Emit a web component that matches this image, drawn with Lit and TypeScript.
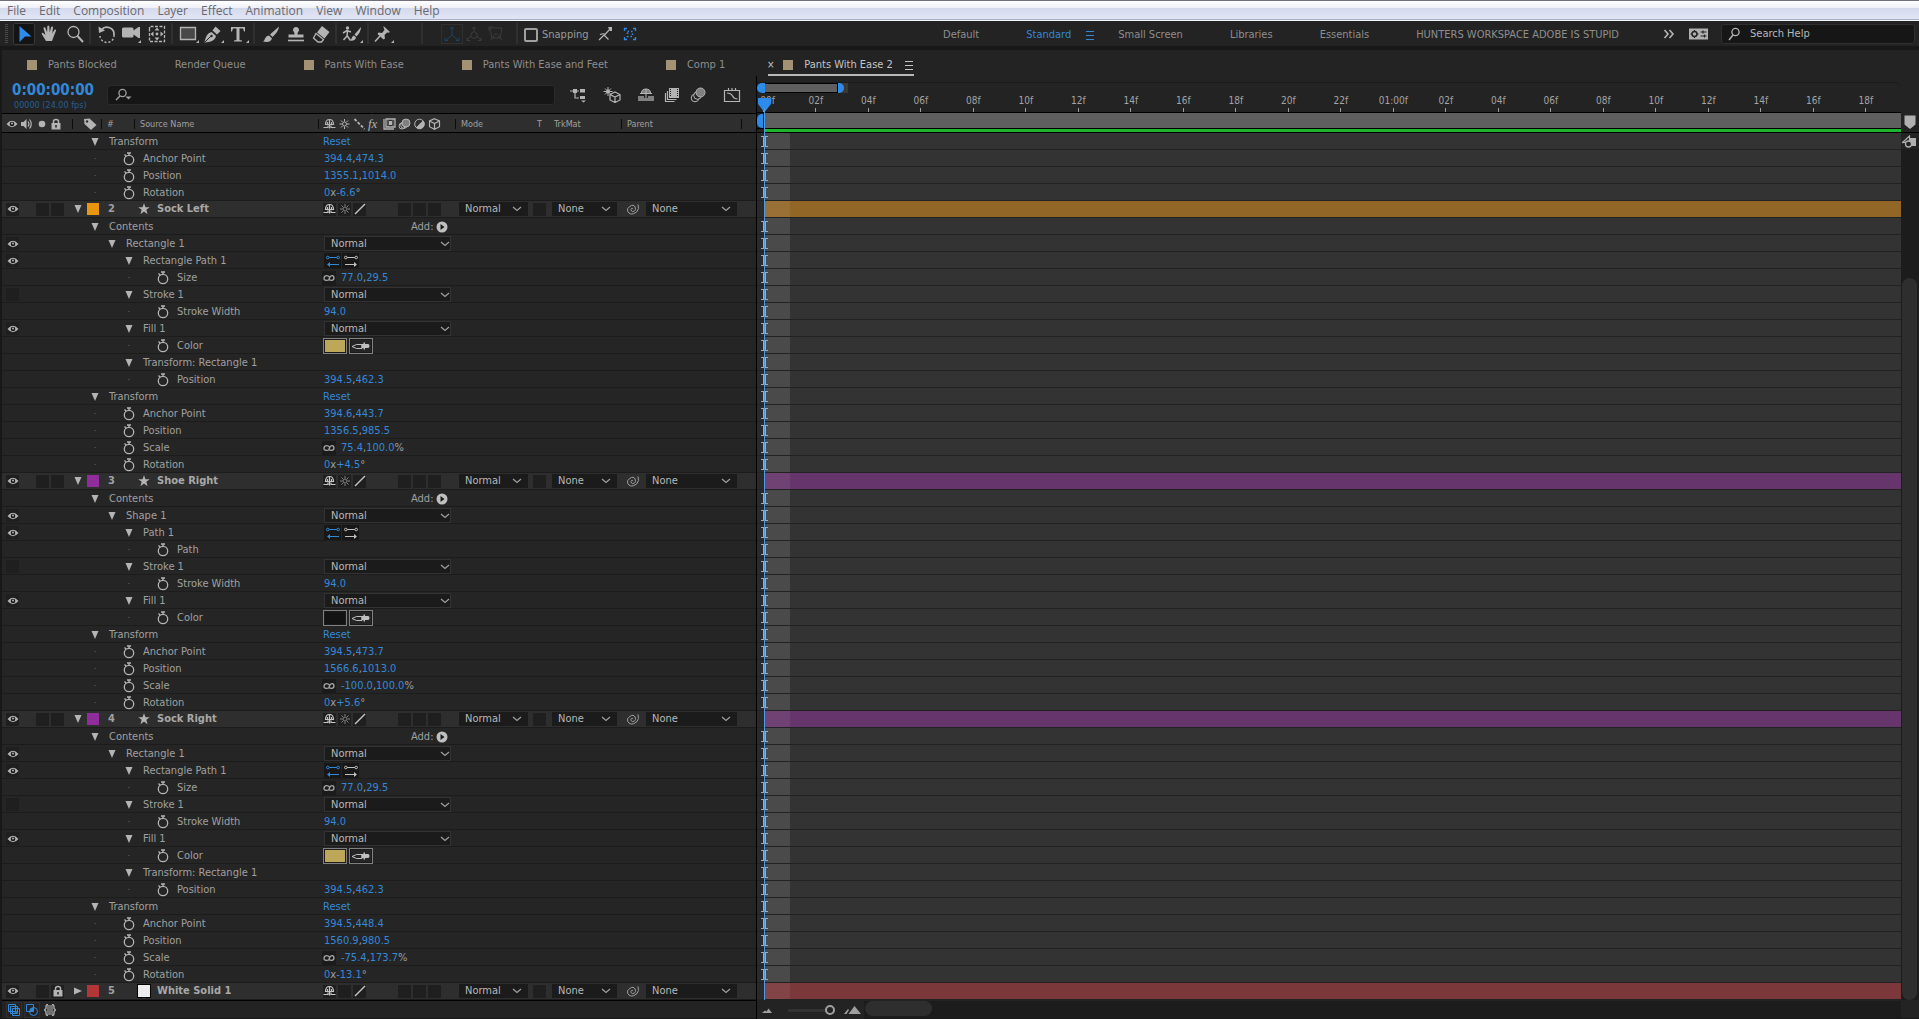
import { LitElement, html, svg, css, nothing } from "lit";
import { customElement, property } from "lit/decorators.js";

type Ctrl =
  | { kind: "none" }
  | { kind: "reset" }
  | { kind: "add" }
  | { kind: "mode" }
  | { kind: "direction" }
  | { kind: "color"; color: string }
  | { kind: "value"; text: string; link?: boolean };

interface Layer { row: "layer"; num: number; name: string; color: string; bar: string; solid?: boolean; }
interface Group { row: "group"; level: number; name: string; ctrl: Ctrl; eye?: "on" | "off"; }
interface Prop { row: "prop"; level: number; name: string; ctrl: Ctrl; }
type Row = Layer | Group | Prop;

const none: Ctrl = { kind: "none" };
const mode: Ctrl = { kind: "mode" };
const group = (level: number, name: string, ctrl: Ctrl = none, eye?: "on" | "off"): Group =>
  ({ row: "group", level, name, ctrl, eye });
const prop = (level: number, name: string, text: string, link = false): Prop =>
  ({ row: "prop", level, name, ctrl: text ? { kind: "value", text, link } : none });
const colorProp = (color: string): Prop =>
  ({ row: "prop", level: 3, name: "Color", ctrl: { kind: "color", color } });
const strokeFill = (color: string): Row[] => [
  group(3, "Stroke 1", mode, "off"),
  prop(3, "Stroke Width", "94.0"),
  group(3, "Fill 1", mode, "on"),
  colorProp(color),
];
const transform = (anchor: string, position: string, scale: string, rotation: string): Row[] => [
  group(1, "Transform", { kind: "reset" }),
  prop(1, "Anchor Point", anchor),
  prop(1, "Position", position),
  ...(scale ? [prop(1, "Scale", scale, true)] : []),
  prop(1, "Rotation", rotation),
];
const rectangle = (): Row[] => [
  group(1, "Contents", { kind: "add" }),
  group(2, "Rectangle 1", mode, "on"),
  group(3, "Rectangle Path 1", { kind: "direction" }, "on"),
  prop(3, "Size", "77.0,29.5", true),
  ...strokeFill("#bda758"),
  group(3, "Transform: Rectangle 1"),
  prop(3, "Position", "394.5,462.3"),
];

const ROWS: Row[] = [
  ...transform("394.4,474.3", "1355.1,1014.0", "", "0x-6.6°"),
  { row: "layer", num: 2, name: "Sock Left", color: "#e8960f", bar: "#926627" },
  ...rectangle(),
  ...transform("394.6,443.7", "1356.5,985.5", "75.4,100.0%", "0x+4.5°"),
  { row: "layer", num: 3, name: "Shoe Right", color: "#8f2d9a", bar: "#66356b" },
  group(1, "Contents", { kind: "add" }),
  group(2, "Shape 1", mode, "on"),
  group(3, "Path 1", { kind: "direction" }, "on"),
  prop(3, "Path", ""),
  ...strokeFill("#131313"),
  ...transform("394.5,473.7", "1566.6,1013.0", "-100.0,100.0%", "0x+5.6°"),
  { row: "layer", num: 4, name: "Sock Right", color: "#8f2d9a", bar: "#66356b" },
  ...rectangle(),
  ...transform("394.5,448.4", "1560.9,980.5", "-75.4,173.7%", "0x-13.1°"),
  { row: "layer", num: 5, name: "White Solid 1", color: "#b23636", bar: "#7a383b", solid: true },
];

const icon = (w: number, h: number, body: unknown) =>
  html`<svg class="icon" width=${w} height=${h} viewBox="0 0 ${w} ${h}" aria-hidden="true">${body}</svg>`;

const line = "fill:none;stroke:currentColor";

const I = {
  select: icon(22, 22, svg`<path d="M6.500 3l12 10.500h-6.500l-5.500 5.500z" fill="#2d8ceb"/>`),
  hand: icon(22, 22, svg`<path d="M7 18l-4-6.500q-1-2 .8-1.800l2.700 2.300-2-6.500q0-1.600 1.600-1.200l2 5 .2-6q1-1.600 2 0l.4 6 1.600-5.500q1.300-1 1.800.4l-.9 6.300 2.300-3.700q1.500-.8 1.600.7l-2.600 6.500-1.500 4z" fill="currentColor"/>`),
  zoom: icon(22, 22, svg`<circle cx="9.500" cy="9" r="5.500" style=${line} stroke-width="1.300"/><path d="M13.500 13l5.500 6" style=${line} stroke-width="2"/>`),
  rotate: icon(22, 22, svg`<path d="M5.500 7a7 7 0 0 1 12.500 5" style=${line} stroke-width="1.800"/><path d="M2.500 3.500l.5 6.500 6-2.500z" fill="currentColor"/><path d="M18 12a7 7 0 0 1-14 1" style=${line} stroke-width="1.500" stroke-dasharray="2 2"/>`),
  camera: icon(25, 22, svg`<path d="M3 6q0-1.500 1.500-1.500h8.500q1.500 0 1.500 1.500v1.500l5-3.500h1.500v11h-1.500l-5-3.500v1.500q0 1.500-1.500 1.500h-8.500q-1.500 0-1.500-1.500z" fill="currentColor"/><path d="M22 17v3h-3z" fill="currentColor"/>`),
  pan: icon(22, 22, svg`<path d="M3.500 7v-3.500h15v15h-15z" style=${line} stroke-width="1.300" stroke-dasharray="3 1.500"/><path d="M11 4.500l2.500 3h-5zM11 17.500l2.500-3h-5zM4.500 11l3-2.500v5zM17.500 11l-3-2.500v5z" fill="currentColor"/><circle cx="11" cy="11" r="1.400" fill="currentColor"/>`),
  rect: icon(25, 22, svg`<path d="M4.500 4.500h15v12h-15z" fill="#484848" stroke="currentColor" stroke-width="1.300"/><path d="M23 17v3h-3z" fill="currentColor"/>`),
  pen: icon(25, 22, svg`<path d="M3.500 19.500c1-5 2-9 7-10.500l4.500 4c-1 4.500-5 6-11.500 6.500z" fill="currentColor"/><path d="M4 19l6-6" stroke="#232323"/><circle cx="10.500" cy="13" r="1.200" fill="#232323"/><path d="M11.500 7.500l3-4 5 4.500-3.500 3.500z" fill="currentColor"/><path d="M23 17v3h-3z" fill="currentColor"/>`),
  type: icon(25, 22, svg`<path d="M5 4h14v4.500h-1l-1-3h-3.500v11.500l2.500.6v.9h-8v-.9l2.500-.6v-11.500h-3.500l-1 3h-1z" fill="currentColor"/><path d="M23 17v3h-3z" fill="currentColor"/>`),
  brush: icon(22, 22, svg`<path d="M19 3.500l-9 8 2.500 2.500q6-5.500 6.500-10.500z" fill="currentColor"/><path d="M3 18.500c2-.5 1.500-5.500 6-6l3 3c-1 3.500-5 4-9 3z" fill="currentColor"/>`),
  stamp: icon(22, 22, svg`<path d="M9.500 11.500q0-2-1.500-4 0-3.500 3-3.500t3 3.500q-1.500 2-1.500 4h6v3h-15v-3z" fill="currentColor"/><path d="M3 17.500h16" stroke="currentColor" stroke-width="1.600"/>`),
  eraser: icon(22, 22, svg`<path d="M12 3l7.500 6-5 6.500-7.500-6z" fill="currentColor"/><path d="M6 10.500l7.500 6-2 2.500h-3.500l-4.500-4z" style=${line} stroke-width="1.300"/>`),
  roto: icon(25, 22, svg`<circle cx="7.500" cy="5" r="1.700" fill="currentColor"/><path d="M3 10l4-2.500 4 1.500M7.500 8l-.5 5-3.500 4M7 12.500l3.500 5" style=${line} stroke-width="1.500"/><path d="M21 4l-6.500 7.500 2 2q4.500-4.500 4.500-9.500zM10 17.500c2-.5 1-4 4-5l2 2c-.5 3-3.500 3.500-6 3z" fill="currentColor"/><path d="M23 17v3h-3z" fill="currentColor"/>`),
  pin: icon(25, 22, svg`<path d="M11.500 3l6.500 6-1.500.8-1.500-.3-2.500 2.500.5 3.500-1.500 1-6-5.500 1-1.500 3.500.4 2.500-3-.8-2z" fill="currentColor"/><path d="M8 13l-5 5.500" stroke="currentColor" stroke-width="1.500"/><path d="M22 17v3h-3z" fill="currentColor"/>`),
  axis1: icon(20, 20, svg`<path d="M10 3v8l-6 5M10 11l6 5M8 5l2-2 2 2M3 13.500v3h3M17 13.500v3h-3" style=${line}/>`),
  axis2: icon(20, 20, svg`<path d="M10 3v5M7 12l-4 4M13 12l4 4M8 5l2-2 2 2M3 13.500v3h3M17 13.500v3h-3" style=${line}/><path d="M10 7.500l3 2v3.500l-3 1.500-3-1.500v-3.500z" style=${line}/>`),
  axis3: icon(20, 20, svg`<path d="M4 4l12 0-2 10h-8zM3 7v-4h4M10 9l-5 7M10 9l6 7" style=${line}/>`),
  snap1: icon(16, 16, svg`<path d="M2 14l5-5M7 9l4.500 4.500M3 8.500q4-1.500 5 0l5-5.500" style=${line} stroke-width="1.200"/><path d="M11 1h4v4h-2z" fill="currentColor"/>`),
  snap2: icon(16, 16, svg`<path d="M2.500 5v-2.500h2.500M11 2.500h2.500v2.500M13.500 11v2.500h-2.500M5 13.500h-2.500v-2.500" style=${line} stroke-width="1.300"/><path d="M5.500 5.500h5v5h-5z" style=${line} stroke-width="1.500" stroke-dasharray="1.500 2"/>`),
  burger: icon(10, 10, svg`<path d="M1 1.500h8M1 5.500h8M1 9.500h8" style=${line}/>`),
  chevrons: icon(12, 12, svg`<path d="M1.500 2l3.500 4-3.500 4M6.500 2l3.500 4-3.500 4" style=${line} stroke-width="1.600"/>`),
  sync: icon(20, 12, svg`<path d="M0 .500h19v11h-19z" fill="#b0b0b0"/><circle cx="5.500" cy="6" r="2.500" fill="none" stroke="#232323" stroke-width="1.500"/><path d="M5.500 2v1.500M5.500 8.500v1.500M1.500 6h1.500M8 6h1.500M11.500 4h6M11.500 8h6M14 2.500v3M15.500 6.500v3" stroke="#232323" stroke-width="1.200"/>`),
  search: icon(14, 14, svg`<circle cx="8.500" cy="5" r="3.600" style=${line} stroke-width="1.300"/><path d="M6 8l-4 5" style=${line} stroke-width="1.500"/>`),
  searchMenu: icon(18, 14, svg`<circle cx="7.500" cy="5" r="3.600" style=${line} stroke-width="1.300"/><path d="M5 8l-4 4" style=${line} stroke-width="1.500"/><path d="M10.500 8.500h6l-3 3z" fill="currentColor"/>`),
  flow: icon(18, 16, svg`<path d="M1 4h9M6 4v7h4" style=${line} stroke-width="1.200"/><path d="M4 2h4v4h-4zM11 2h5v3.500h-5zM11 9h5v3h-5z" fill="currentColor"/><path d="M12 13.500h5l-2.500 2z" fill="currentColor"/>`),
  draft: icon(18, 16, svg`<path d="M5 0v9M.500 4.500h9M2 1.500l6 6M8 1.500l-6 6" style=${line}/><circle cx="5" cy="4.500" r="2" fill="currentColor"/><path d="M12 5l5 2.500v5.500l-5 2.500-5-2.500v-5.500zM7 7.500l5 2.500 5-2.500M12 10v5.500" fill="#232323" stroke="currentColor" stroke-width="1.200"/>`),
  shyBig: icon(18, 16, svg`<path d="M4 7q0-5 5-5t5 5z" fill="#808080"/><path d="M4.500 6.500q0-4.500 4.500-4.500t4.500 4.500M9 2v9M3 6.500h12" style=${line}/><path d="M1 9h6v2h4v-2h6v5h-16z" fill="#808080"/>`),
  blendBig: icon(16, 16, svg`<path d="M5 1h10v10h-10z" fill="currentColor"/><path d="M6.500 2v8M13.500 2v8" stroke="#232323" stroke-dasharray="1 1"/><path d="M3.500 4v8.500h9M1.500 6v8.500h9" style=${line} stroke-width="1.200"/>`),
  blurBig: icon(16, 16, svg`<circle cx="5" cy="11" r="3.800" style=${line}/><circle cx="7.500" cy="8.500" r="3.800" fill="#232323" stroke="currentColor"/><circle cx="10.500" cy="5.500" r="4.500" fill="#808080" stroke="currentColor"/>`),
  graph: icon(18, 16, svg`<path d="M1.500 3.500h15v11h-15zM5.500 1v3M9 1v3M12.500 1v3" style=${line} stroke-width="1.200"/><path d="M4 6q4 0 5.500 3t5 3" style=${line} stroke-width="1.200"/>`),
  eye: icon(12, 10, svg`<path d="M.500 5q5.500-6.500 11 0-5.500 6.500-11 0z" fill="currentColor"/><circle cx="6" cy="5" r="2.300" fill="#1b1b1b"/><circle cx="6" cy="4.500" r="1" fill="currentColor"/>`),
  sound: icon(14, 12, svg`<path d="M1 4h2.500l3-3v10l-3-3h-2.500z" fill="currentColor"/><path d="M8 3.500q2 2.500 0 5M9.500 1.500q3.500 4.500 0 9" style=${line} stroke-width="1.200"/>`),
  solo: icon(12, 12, svg`<circle cx="6" cy="6" r="3.300" fill="currentColor"/>`),
  lock: icon(12, 12, svg`<path d="M3.500 6v-2.500q0-2 2.500-2t2.500 2v2.500" style=${line} stroke-width="1.500"/><path d="M1.500 5h9v6.500h-9z" fill="currentColor"/><path d="M6 7v2.500" stroke="#232323" stroke-width="1.500"/>`),
  tag: icon(14, 14, svg`<path d="M1 2l5.500-.5 7 6.500-5.500 5-6.500-6z" fill="currentColor"/><circle cx="4" cy="4.500" r="1.200" fill="#2e2e2e"/>`),
  shy: icon(13, 12, svg`<path d="M2.500 6.500q0-5 4-5t4 5zM6.500 1.500v9M4.500 4v2M8.500 4v2" style=${line} stroke-width="1.200"/><path d="M.500 9.500h4.500v-2M12.500 9.500h-4.500v-2" style=${line} stroke-width="1.200"/>`),
  sun: icon(12, 12, svg`<circle cx="6" cy="6" r="2" style=${line}/><path d="M6 1v2.500M6 8.500v2.500M1 6h2.500M8.500 6h2.500M2.500 2.500l1.500 1.500M8 8l1.500 1.500M9.500 2.500l-1.500 1.500M4 8l-1.500 1.500" style=${line}/>`),
  quality: icon(12, 12, svg`<path d="M1 1l10 10" stroke="currentColor" stroke-width="1.800" stroke-dasharray="3 1.500"/>`),
  slash: icon(12, 12, svg`<path d="M1 11l10-10" stroke="currentColor" stroke-width="1.400"/>`),
  film: icon(13, 12, svg`<path d="M1 1v10h10M3 1h9v8h-9z" style=${line} stroke-width="1.300"/><path d="M5 1.500v7M10 1.500v7" stroke="currentColor" stroke-dasharray="1 1"/><path d="M6 3h3v4h-3z" fill="currentColor"/>`),
  blur: icon(13, 12, svg`<circle cx="4" cy="8" r="3" style=${line}/><circle cx="6" cy="7" r="3.300" style=${line}/><circle cx="8" cy="5" r="4" fill="#808080" stroke="currentColor"/>`),
  adjust: icon(12, 12, svg`<circle cx="6" cy="6" r="4.800" style=${line}/><path d="M9.500 2.500a4.900 4.900 0 1 1-7 7z" fill="currentColor"/>`),
  cube: icon(12, 12, svg`<path d="M6 .700l5 2.300v5.700l-5 2.600-5-2.600v-5.700zM1 3l5 2.500 5-2.500M6 5.500v5.800" style=${line} stroke-width="1.200"/>`),
  down: icon(8, 10, svg`<path d="M.500 1h7l-3.500 8z" fill="currentColor"/>`),
  right: icon(10, 8, svg`<path d="M1 .500l8 3.500-8 3.500z" fill="currentColor"/>`),
  star: icon(12, 12, svg`<path d="M6 .300l1.500 4h4.200l-3.400 2.500 1.300 4.400-3.600-2.700-3.600 2.700 1.300-4.400-3.400-2.500h4.200z" fill="currentColor"/>`),
  watch: icon(12, 14, svg`<circle cx="6" cy="8" r="4.700" style=${line} stroke-width="1.300"/><path d="M4 1h4M6 1v2.500M1.500 2.500l1.800 1.800" style=${line} stroke-width="1.300"/>`),
  add: icon(12, 12, svg`<circle cx="6" cy="6" r="5.500" fill="#c0c0c0"/><path d="M4.500 3l4 3-4 3z" fill="#1b1b1b"/>`),
  link: icon(12, 6, svg`<path d="M6.500 2q-1-1.300-3-1.300t-2.500 2.300 2.500 2.300 2.500-1.300l1-2q.7-1.300 2-1.300 2 0 2 2.300t-2.500 2.300-2.500-1.300" style=${line} stroke-width="1.300"/>`),
  dirBack: icon(14, 12, svg`<path d="M2.500 2.500h9M3 9.500h10" style=${line}/><circle cx="1.800" cy="2.500" r="1.300" fill="#151515" stroke="currentColor"/><circle cx="12.200" cy="2.500" r="1.300" fill="#151515" stroke="currentColor"/><path d="M1 9.500l3-2.500v5z" fill="currentColor"/>`),
  dirFwd: icon(14, 12, svg`<path d="M2.500 2.500h9M1 9.500h10" style=${line}/><circle cx="1.800" cy="2.500" r="1.300" fill="#151515" stroke="currentColor"/><circle cx="12.200" cy="2.500" r="1.300" fill="#151515" stroke="currentColor"/><path d="M13 9.500l-3-2.500v5z" fill="currentColor"/>`),
  dropper: icon(20, 10, svg`<path d="M1 5.500q4-3 10-2v4q-6 1-10-2z" style=${line}/><path d="M10.500 3h2v-1.500h1.500v1.500h3.500q2 2 0 4h-3.500v1.500h-1.500v-1.500h-2z" fill="currentColor"/>`),
  whip: icon(13, 12, svg`<path d="M7 6.200q-.5-1.400-1.500-.7t-.2 2.300 3 .4.800-4.200-5.200-.7-2 5.400 5.700 2 4.900-5.200l-.5-4" style=${line}/>`),
  chevron: icon(10, 6, svg`<path d="M1 1l4 3.500 4-3.500" style=${line} stroke-width="1.200"/>`),
  foot1: icon(12, 12, svg`<path d="M.500.500h7v7h-7zM2.500 2.500h7v7h-7zM4.500 4.500h7v7h-7zM8 6.500v3M6.500 8h3" fill="#232323" stroke="currentColor"/>`),
  foot2: icon(12, 12, svg`<path d="M.500.500h7v7h-7z" style=${line}/><circle cx="7.500" cy="7.500" r="4" style=${line}/><path d="M4 7.500q0-3.500 3.500-4v4z" fill="currentColor"/>`),
  foot3: icon(12, 12, svg`<path d="M3 1h6v10h-6z" fill="#707070"/><path d="M4 .500q-2 0-2 2v2l-1.500 1.500 1.500 1.500v2q0 2 2 2M8 .500q2 0 2 2v2l1.500 1.500-1.500 1.500v2q0 2-2 2" style=${line} stroke-width="1.300"/>`),
  hillSmall: icon(10, 5, svg`<path d="M0 5l3-2.500 1.500 1 2-3 3.500 4.500z" fill="currentColor"/>`),
  hillBig: icon(17, 8, svg`<path d="M0 8l4-5 1 1-2.500 4zM4.500 8l6-8 6.500 8z" fill="currentColor"/>`),
  marker: icon(12, 14, svg`<path d="M.500.500h11v9l-5.500 4.500-5.500-4.500z" fill="currentColor"/>`),
  comp: icon(14, 13, svg`<path d="M7 3h7v8h-7z" fill="currentColor"/><path d="M.500 7.500l7-6.500v6z" fill="#232323" stroke="currentColor" stroke-width="1.200"/><circle cx="6.500" cy="9" r="3" fill="#232323" stroke="currentColor" stroke-width="1.300"/>`),
};

const base = css`
  *, *::before, *::after { box-sizing: border-box; }
  button, input, select {
    font: inherit; color: inherit; background: none; border: 0; padding: 0; margin: 0;
    border-radius: 0; appearance: none; outline-offset: -1px;
  }
  button { display: flex; align-items: center; justify-content: center; white-space: pre; }
  .icon { display: block; flex: none; }
`;

const dropdown = (label: string, value: string, cls = "") => html`
  <span class="drop ${cls}">
    <select aria-label=${label}><option>${value}</option></select>
    ${I.chevron}
  </span>`;

@customElement("layer-row")
class LayerRow extends LitElement {
  @property({ attribute: false }) data!: Row;

  static styles = [base, css`
    :host { display: block; height: 17px; border-bottom: 1px solid #1c1c1c; background: #252525; line-height: 16px; }
    .layer { display: grid; grid-template-columns: var(--columns); height: 16px; background: #2e2e2e; }
    .layer > *, .prop > *, .prop > .ctrl > span { display: flex; align-items: center; }
    .prop { display: grid; grid-template-columns: 66px 254px 1fr; height: 16px; }
    .av { gap: 2px; padding-left: 4px; color: #b4b4b4; }
    .box { width: 13px; height: 13px; background: #1f1f1f; flex: none; }
    .box.clear { background: none; }
    .twirl { width: 14px; height: 16px; flex: none; color: #b4b4b4; }
    .label { gap: 2px; padding-left: 3px; }
    .swatch { width: 12px; height: 12px; }
    .num { padding-left: 7px; font-weight: bold; }
    .name { gap: 7px; padding-left: 4px; font-weight: bold; color: #a8a8a8; }
    .kind { width: 12px; display: flex; color: #b4b4b4; }
    .solid { height: 12px; background: #ececec; outline: 1px solid #000; }
    .switches { gap: 2px; padding-left: 5px; color: #c4c4c4; }
    .gap { width: 28px; }
    .dim { color: #808080; }
    .drop { display: grid; grid-template-columns: 1fr 16px; align-items: center; height: 14px; background: #1b1b1b; color: #b8b8b8; }
    .drop select { grid-area: 1 / 1 / 2 / 3; width: 100%; height: 14px; padding-left: 6px; line-height: 14px; }
    .drop .icon { grid-area: 1 / 2; pointer-events: none; justify-self: start; color: #a0a0a0; }
    .mode .drop { width: 69px; margin-left: 4px; }
    .trk .drop { width: 65px; margin-left: 4px; }
    .parent { gap: 7px; padding-left: 5px; color: #a0a0a0; }
    .parent .drop { width: 91px; }
    .name-cell { padding-left: calc(3px + var(--indent)); }
    .text { padding: 1px 0 0 7px; white-space: pre; }
    .dot { width: 34px; display: flex; align-items: center; padding-left: 6px; gap: 8px; }
    .dot::before { content: ""; width: 2px; height: 1px; background: #444; }
    .blue { color: #3388d8; }
    .reset { padding: 1px 0 0 1px; }
    .ctrl > .vals { display: block; color: #a0a0a0; white-space: pre; padding: 1px 0 0 2px; }
    .vals button { display: inline; }
    .ctrl > .wide { display: grid; width: 127px; height: 15px; border: 1px solid #333; margin-left: 2px; }
    .wide select { height: 13px; line-height: 13px; padding-left: 6px; }
    .linkbox { width: 14px; height: 14px; background: #1b1b1b; margin-right: 3px; color: #a8a8a8; }
    .addline { gap: 3px; padding-left: 89px; }
    .dirs { gap: 1px; padding-left: 2px; }
    .dir { width: 17px; height: 15px; background: #171717; }
    .dir.fwd { color: #c0c0c0; }
    .chips { gap: 2px; padding-left: 1px; }
    .chip { width: 24px; height: 16px; border: 1px solid #808080; box-shadow: inset 0 0 0 1px #1b1b1b; color: #c0c0c0; }
  `];

  private eye(on: boolean) {
    return html`<button class="box" aria-label="Visibility">${on ? I.eye : nothing}</button>`;
  }

  private renderLayer(d: Layer) {
    return html`
      <div class="layer">
        <span class="av">
          ${this.eye(true)}
          <span class="box clear"></span>
          <button class="box" aria-label="Solo"></button>
          <button class="box" aria-label="Lock">${d.solid ? I.lock : nothing}</button>
        </span>
        <span class="label">
          <button class="twirl" aria-label="Expand layer">${d.solid ? I.right : I.down}</button>
          <button class="swatch" aria-label="Label color" style="background:${d.color}"></button>
        </span>
        <span class="num">${d.num}</span>
        <span class="name">
          ${d.solid ? html`<span class="kind solid"></span>` : html`<span class="kind">${I.star}</span>`}
          <span>${d.name}</span>
        </span>
        <span class="switches">
          <button class="box" aria-label="Shy">${I.shy}</button>
          <button class="box dim" aria-label="Collapse transformations">${d.solid ? nothing : I.sun}</button>
          <button class="box" aria-label="Quality">${I.slash}</button>
          <span class="gap"></span>
          <button class="box" aria-label="Motion blur"></button>
          <button class="box" aria-label="Adjustment layer"></button>
          <button class="box" aria-label="3D layer"></button>
        </span>
        <span class="mode">${dropdown("Mode", "Normal")}</span>
        <span><button class="box" aria-label="Preserve transparency"></button></span>
        <span class="trk">${dropdown("Track matte", "None")}</span>
        <span class="parent">${I.whip}${dropdown("Parent", "None")}</span>
      </div>`;
  }

  private renderCtrl(c: Ctrl) {
    switch (c.kind) {
      case "reset": return html`<button class="blue reset">Reset</button>`;
      case "add": return html`<span class="addline">Add:<button aria-label="Add">${I.add}</button></span>`;
      case "mode": return dropdown("Blend mode", "Normal", "wide");
      case "direction": return html`<span class="dirs">
        <button class="dir blue" aria-label="Path direction forward">${I.dirBack}</button>
        <button class="dir fwd" aria-label="Path direction reverse">${I.dirFwd}</button></span>`;
      case "color": return html`<span class="chips">
        <button class="chip" aria-label="Color" style="background:${c.color}"></button>
        <button class="chip" aria-label="Eyedropper">${I.dropper}</button></span>`;
      case "value": return html`
        ${c.link ? html`<button class="linkbox" aria-label="Constrain proportions">${I.link}</button>` : nothing}
        <span class="vals">${c.text.split(/([,x°%])/).filter(Boolean).map(p =>
          /[,x°%]/.test(p) ? p : html`<button class="blue">${p}</button>`)}</span>`;
      default: return nothing;
    }
  }

  render() {
    const d = this.data;
    if (d.row === "layer") return this.renderLayer(d);
    return html`
      <div class="prop">
        <span class="av">${d.row === "group" && d.eye ? this.eye(d.eye === "on") : nothing}</span>
        <span class="name-cell" style="--indent:${d.level * 17}px">
          ${d.row === "group"
            ? html`<button class="twirl" aria-label="Expand">${I.down}</button>`
            : html`<span class="dot"></span><button class="twirl" aria-label="Keyframes">${I.watch}</button>`}
          <span class="text">${d.name}</span>
        </span>
        <span class="ctrl">${this.renderCtrl(d.ctrl)}</span>
      </div>`;
  }
}

@customElement("time-ruler")
class TimeRuler extends LitElement {
  static styles = [base, css`
    :host { display: block; height: 57px; padding-top: 6px; overflow: hidden; }
    .nav { display: flex; height: 11px; border-top: 1px solid #1b1b1b; border-radius: 0 6px 0 0; }
    .cap { width: 8px; height: 10px; background: #2d8ceb; border-radius: 5px 0 0 5px; flex: none; }
    .cap.end { width: 6px; border-radius: 0 5px 5px 0; }
    .tail { width: 10px; margin-left: -6px; background: #3d3930; display: flex; }
    .span { width: 73px; background: #5f5f5f; border: 1px solid #000; border-left: 0; margin-right: 6px; }
    .marks { display: flex; height: 19px; margin: 0 9px 0 -20px; }
    .mark { flex: 1; display: flex; flex-direction: column; align-items: center; justify-content: flex-end; font-size: 10px; line-height: 14px; color: #a4a4a4; white-space: pre; }
    .mark::after { content: ""; width: 1px; height: 4px; background: #a0a0a0; flex: none; }
    .work { display: flex; height: 17px; background: #5f5f5f; border: 1px solid #000; border-width: 1px 0; }
    .work .cap { width: 6px; height: 14px; margin-right: 1px; align-self: center; }
    .lead { background: #1f1f1f; display: flex; }
    .cache { height: 4px; border-bottom: 1px solid #000; }
    .cache i { display: block; height: 3px; margin-left: 8px; background: #1eb52c; }
  `];

  render() {
    const labels = Array.from({ length: 22 }, (_, i) => {
      const f = (i * 2) % 24;
      return i === 0 ? "0:00f" : i === 12 ? "01:00f" : `${String(f).padStart(2, "0")}f`;
    });
    return html`
      <div class="nav"><span class="cap"></span><span class="span"></span><span class="tail"><span class="cap end"></span></span></div>
      <div class="marks">${labels.map(l => html`<span class="mark">${l}</span>`)}</div>
      <div class="work"><span class="lead"><span class="cap"></span></span></div>
      <div class="cache"><i></i></div>`;
  }
}

@customElement("app-root")
class AppRoot extends LitElement {
  static styles = [base, css`
    :host {
      display: flex; flex-direction: column; min-height: 100vh; background: #232323; color: #a0a0a0;
      font: 11px/16px "DejaVu Sans Condensed", "DejaVu Sans", Tahoma, sans-serif; overflow: hidden;
      --columns: 66px 33px 33px 184px 137px 78px 15px 73px 1fr;
    }
    .menu { display: flex; gap: 13px; height: 21px; padding: 0 7px; border-top: 1px solid #70707c; border-bottom: 1px solid #f4f6fc;
      background: linear-gradient(#fff 0, #eef0f6 7px, #d4daec 7px, #e2e5f6 18px, #a8b0c8 18px); color: #6a6a70; font: 12px/20px "Open Sans", "Noto Sans", sans-serif; }
    .tools { display: flex; align-items: center; height: 29px; padding-bottom: 4px; box-shadow: inset 0 -4px #181818; color: #b4b4b4; }
    .grip { width: 3px; height: 19px; margin: 0 4px 0 5px; background: repeating-linear-gradient(#484848 0 1px, transparent 1px 2px); }
    .tool { width: 25px; height: 22px; flex: none; }
    .tool.on { width: 22px; margin: 0 2px 0 1px; background: #141414; outline: 1px solid #383838; outline-offset: -1px; border-radius: 2px; }
    .sep { width: 2px; height: 21px; margin: 0 3px 0 2px; background: #303030; flex: none; }
    .sep.far { margin-left: 24px; margin-right: 18px; }
    .axis { width: 22px; height: 20px; color: #3c3c3c; }
    .axis.on { color: #1c4468; border: 1px solid #303030; }
    .sep.snap { margin: 0 6px 0 9px; }
    .check { display: flex; align-items: center; gap: 4px; color: #9a9a9a; padding-top: 2px; }
    .check input { width: 14px; height: 14px; border: 2px solid #a0a0a0; border-radius: 2px; }
    .snapicons { display: flex; gap: 9px; margin-left: 8px; }
    .snapicons .hot { color: #2d8ceb; }
    .spacer { flex: 1; }
    .spaces { display: flex; align-items: center; gap: 47px; color: #8e8e8e; padding-top: 3px; }
    .spaces .current { color: #3388d8; gap: 14px; margin-right: -24px; }
    .end { display: flex; align-items: center; gap: 14px; padding: 0 4px 0 0; }
    .end .more { margin-left: 44px; }
    .pair { display: flex; align-items: center; gap: 12px; }
    .help { display: flex; align-items: center; gap: 9px; width: 194px; height: 20px; padding-left: 5px; background: #161616; border: 1px solid #303030; border-radius: 3px; }
    .help input { flex: 1; min-width: 0; line-height: 16px; color: #c0c0c0; }
    .help input::placeholder { color: #b8b8b8; opacity: 1; }
    .tabs { display: flex; gap: 43px; height: 26px; align-items: stretch; border-left: 2px solid #181818; padding-left: 10px; }
    .tab { color: #8e8e8e; gap: 11px; border-bottom: 2px solid transparent; padding-top: 5px; }
    .tab.on { color: #c4c4c4; border-bottom-color: #b8b8b8; }
    .tab .close { width: 5px; font-size: 10px; display: flex; justify-content: center; margin-right: -1px; }
    .tab .sw { width: 10px; height: 10px; background: #a39273; }
    .main { display: grid; grid-template-columns: 756px minmax(0, 1fr) 18px; flex: 1; }
    .left { border-left: 2px solid #181818; min-width: 0; }
    .top { display: flex; align-items: center; height: 37px; }
    .time { width: 105px; padding: 2px 0 0 10px; color: #3388d8; }
    .time button { font: bold 15px/18px "DejaVu Sans Condensed", "DejaVu Sans", sans-serif; }
    .time .sub { display: block; font-size: 9px; line-height: 12px; padding-left: 2px; color: #255f96; }
    .find { display: flex; align-items: center; gap: 4px; width: 448px; height: 20px; padding-left: 7px; background: #161616; border: 1px solid #2a2a2a; border-radius: 3px; }
    .find input { flex: 1; min-width: 0; }
    .opts { display: flex; align-items: center; color: #b4b4b4; padding-left: 14px; gap: 16px; }
    .opts button { width: 18px; }
    .opts .tight { display: flex; gap: 8px; }
    .head { display: grid; grid-template-columns: var(--columns); height: 20px; background: #2e2e2e; border: 1px solid #000; border-width: 1px 0; font-size: 9px; line-height: 18px; }
    .head > * { display: flex; align-items: center; padding-top: 1px; }
    .head > .d::before { content: ""; width: 1px; height: 10px; background: #0c0c0c; }
    .head .av { gap: 2px; padding-left: 4px; color: #b4b4b4; }
    .head .tag { justify-content: center; gap: 10px; color: #b4b4b4; }
    .head .num { gap: 5px; }
    .head .src { gap: 5px; }
    .head .sw { gap: 2px; color: #b4b4b4; }
    .head .sw::before { margin-right: 2px; }
    .head .sw > * { width: 13px; }
    .fx { font: italic 13px/12px "Liberation Serif", serif; }
    .head .par { gap: 5px; }
    .head .t { padding-left: 4px; }
    .head .tm { padding-left: 6px; }
    .head .par i { width: 1px; height: 10px; background: #0c0c0c; margin-left: auto; margin-right: 14px; }
    .foot { display: flex; align-items: center; height: 19px; border-top: 1px solid #000; box-shadow: inset 0 -1px #181818; }
    .left .foot { gap: 2px; padding-left: 4px; color: #3388d8; }
    .left .foot button { width: 16px; height: 16px; border: 1px solid #303030; }
    .left .foot .plain { border: 0; color: #b0b0b0; }
    .line { position: relative; border-left: 1px solid #000; min-width: 0; }
    .track { height: 17px; border-bottom: 1px solid #222; background: linear-gradient(90deg, #2b2b2b 7px, #4a4a4a 7px 33px, #333 33px); display: flex; padding-left: 4px; align-items: center; }
    .bar { flex: 1; height: 16px; margin-left: 4px; background-image: linear-gradient(90deg, #ffffff10 25px, transparent 25px); }
    .beam { width: 7px; height: 11px; border: 1px solid #a8a8a8; border-width: 1px 0; display: flex; justify-content: center; }
    .beam::before { content: ""; width: 3px; background: #a8a8a8; }
    .playhead { position: absolute; left: 0; top: 22px; bottom: 19px; width: 15px; display: flex; flex-direction: column; align-items: center; color: #2d8ceb; pointer-events: none; }
    .playhead i { flex: 1; width: 1px; background: #4a9ae4; margin-top: -4px; }
    .line .foot { background: #1c1c1c; border-top-color: #222; }
    .zoomer { display: flex; align-items: center; gap: 9px; width: 107px; height: 18px; padding-left: 5px; background: #232323; color: #a0a0a0; }
    .zoomer input { width: 47px; height: 12px; margin-left: 7px; background: linear-gradient(#333, #333) center / 100% 3px no-repeat; }
    .zoomer input::-webkit-slider-thumb { appearance: none; width: 10px; height: 10px; border: 2px solid #a0a0a0; border-radius: 50%; background: #232323; }
    .hthumb { width: 67px; height: 15px; border-radius: 8px; background: #2e2e2e; align-self: flex-start; margin-left: 1px; }
    .edge { display: flex; flex-direction: column; color: #b0b0b0; padding-top: 37px; }
    .edge .cellm { height: 20px; padding: 2px 0 0 3px; border-bottom: 1px solid #000; }
    .edge .cellc { height: 16px; padding: 2px 0 0 1px; }
    .vtrack { flex: 1; background: #1c1c1c; padding: 129px 2px 0 1px; display: flex; }
    .vthumb { flex: 1; border-radius: 8px; background: #2e2e2e; }
    .corner { height: 19px; box-shadow: inset 0 -1px #181818; }
  `];

  private tool(label: string, glyph: unknown, cls = "") {
    return html`<button class="tool ${cls}" aria-label=${label}>${glyph}</button>`;
  }

  private tab(name: string, swatch = true, on = false) {
    return html`<button class="tab ${on ? "on" : ""}">
      <span class="close">${on ? "×" : ""}</span>${swatch ? html`<span class="sw"></span>` : nothing}<span>${name}</span>${on ? I.burger : nothing}
    </button>`;
  }

  render() {
    return html`
      <nav class="menu">${["File", "Edit", "Composition", "Layer", "Effect", "Animation", "View", "Window", "Help"].map(m => html`<button>${m}</button>`)}</nav>
      <div class="tools">
        <span class="grip"></span>
        ${this.tool("Selection", I.select, "on")}${this.tool("Hand", I.hand)}${this.tool("Zoom", I.zoom)}
        <span class="sep"></span>
        ${this.tool("Rotate", I.rotate)}${this.tool("Camera", I.camera)}${this.tool("Pan behind", I.pan)}
        <span class="sep"></span>
        ${this.tool("Rectangle", I.rect)}${this.tool("Pen", I.pen)}${this.tool("Type", I.type)}
        <span class="sep"></span>
        ${this.tool("Brush", I.brush)}${this.tool("Clone stamp", I.stamp)}${this.tool("Eraser", I.eraser)}
        <span class="sep"></span>
        ${this.tool("Roto brush", I.roto)}
        <span class="sep"></span>
        ${this.tool("Puppet pin", I.pin)}
        <span class="sep far"></span>
        <button class="axis on" aria-label="Local axis">${I.axis1}</button>
        <button class="axis" aria-label="World axis">${I.axis2}</button>
        <button class="axis" aria-label="View axis">${I.axis3}</button>
        <span class="sep snap"></span>
        <label class="check"><input type="checkbox" />Snapping</label>
        <span class="snapicons"><button aria-label="Snap to edges">${I.snap1}</button><button class="hot" aria-label="Snap to features">${I.snap2}</button></span>
        <span class="spacer"></span>
        <span class="spaces">
          <button>Default</button>
          <button class="current">Standard${I.burger}</button>
          <button>Small Screen</button>
          <button>Libraries</button>
          <button>Essentials</button>
          <button>HUNTERS WORKSPACE ADOBE IS STUPID</button>
        </span>
        <span class="end">
          <button class="more" aria-label="More workspaces">${I.chevrons}</button>
          <span class="pair">
            <button aria-label="Sync settings">${I.sync}</button>
            <label class="help">${I.search}<input type="text" aria-label="Search Help" placeholder="Search Help" /></label>
          </span>
        </span>
      </div>
      <div class="tabs">
        ${this.tab("Pants Blocked")}${this.tab("Render Queue", false)}${this.tab("Pants With Ease")}
        ${this.tab("Pants With Ease and Feet")}${this.tab("Comp 1")}${this.tab("Pants With Ease 2", true, true)}
      </div>
      <div class="main">
        <section class="left">
          <div class="top">
            <div class="time"><button>0:00:00:00</button><span class="sub">00000 (24.00 fps)</span></div>
            <label class="find">${I.searchMenu}<input type="text" aria-label="Search layers" /></label>
            <div class="opts">
              <button aria-label="Mini-flowchart">${I.flow}</button>
              <button aria-label="Draft 3D">${I.draft}</button>
              <span class="tight">
                <button aria-label="Hide shy layers">${I.shyBig}</button>
                <button aria-label="Frame blending">${I.blendBig}</button>
                <button aria-label="Motion blur">${I.blurBig}</button>
              </span>
              <button aria-label="Graph editor">${I.graph}</button>
            </div>
          </div>
          <div class="head">
            <span class="av">${I.eye}${I.sound}${I.solo}${I.lock}</span>
            <span class="tag d">${I.tag}</span>
            <span class="num d">#</span>
            <span class="src d">Source Name</span>
            <span class="sw d">${I.shy}${I.sun}${I.quality}<span class="fx">fx</span>${I.film}${I.blur}${I.adjust}${I.cube}</span>
            <span class="par d">Mode</span>
            <span class="t">T</span>
            <span class="tm">TrkMat</span>
            <span class="par d">Parent<i></i></span>
          </div>
          ${ROWS.map(r => html`<layer-row .data=${r}></layer-row>`)}
          <div class="foot">
            <button aria-label="Layer switches">${I.foot1}</button>
            <button aria-label="Transfer controls">${I.foot2}</button>
            <button class="plain" aria-label="In and out">${I.foot3}</button>
          </div>
        </section>
        <section class="line">
          <time-ruler></time-ruler>
          ${ROWS.map(r => html`<div class="track">${r.row === "layer"
            ? html`<div class="bar" style="background-color:${r.bar}"></div>`
            : html`<span class="beam"></span>`}</div>`)}
          <div class="foot">
            <span class="zoomer">${I.hillSmall}<input type="range" min="0" max="100" value="100" aria-label="Timeline zoom" />${I.hillBig}</span>
            <span class="hthumb"></span>
          </div>
          <div class="playhead">${icon(13, 14, svg`<path d="M0 0h13v6l-5.500 7h-2l-5.500-7z" fill="currentColor"/>`)}<i></i></div>
        </section>
        <aside class="edge">
          <span class="cellm">${I.marker}</span>
          <span class="cellc">${I.comp}</span>
          <div class="vtrack"><div class="vthumb"></div></div>
          <div class="corner"></div>
        </aside>
      </div>`;
  }
}
